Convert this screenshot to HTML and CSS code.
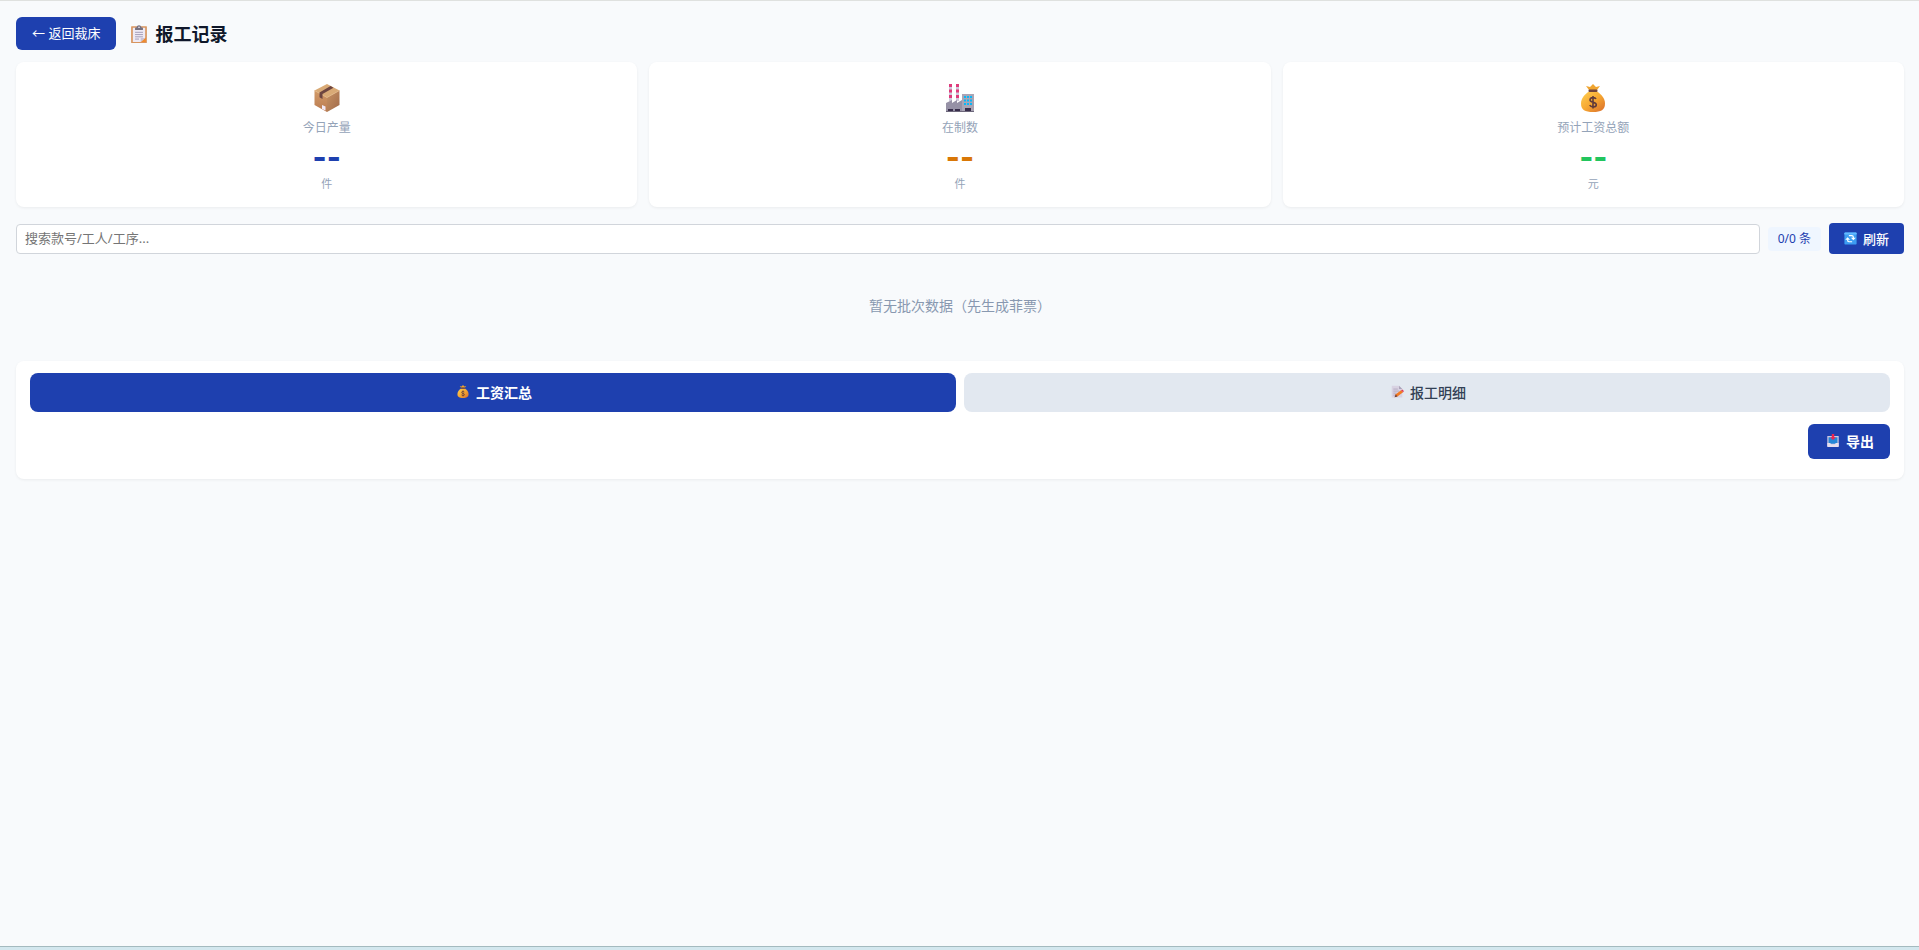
FILE: index.html
```html
<!DOCTYPE html>
<html lang="zh-CN">
  <head>
    <meta charset="UTF-8" />
    <meta name="viewport" content="width=device-width, initial-scale=1.0" />
    <title>报工记录</title>
    <link rel="stylesheet" href="styles.css">
  </head>
  <body>
    <svg class="sprite" aria-hidden="true">
      <defs>
        <linearGradient id="gold" x1="0" y1="0" x2="1" y2="1">
          <stop offset="0" stop-color="#ffd052" />
          <stop offset="0.5" stop-color="#f6a832" />
          <stop offset="1" stop-color="#d96c2c" />
        </linearGradient>
        <linearGradient id="box-left" x1="0" y1="0" x2="0" y2="1">
          <stop offset="0" stop-color="#d29b68" />
          <stop offset="1" stop-color="#b97a51" />
        </linearGradient>
        <linearGradient id="box-right" x1="0" y1="0" x2="1" y2="1">
          <stop offset="0" stop-color="#c79263" />
          <stop offset="1" stop-color="#a06a4a" />
        </linearGradient>
      </defs>

      <symbol id="icon-clipboard" viewBox="0 0 32 32">
        <rect x="2" y="2" width="28" height="30" rx="1" fill="#d8955f" />
        <path d="M5 5h22v18l-7 7H5z" fill="#eeeaf4" />
        <path d="M28 22v8h-9z" fill="#f08b2e" />
        <path d="M19 30v-7h8z" fill="#c9c2d6" />
        <path d="M9 13h14M9 17h14M9 21h14M9 25h7" stroke="#9d96b3" stroke-width="1.6" />
        <path d="M9 9V5l3-1c0-5 8-5 8 0l3 1v4z" fill="#77717f" />
        <circle cx="16" cy="4" r="1.5" fill="#e9e4ee" />
      </symbol>

      <symbol id="icon-box" viewBox="0 0 28 28">
        <path d="M14 0l12.500 6.500L14 13.500 1.500 6.500z" fill="#d9aa76" />
        <path d="M1.500 6.500L14 13.500V28L1.500 21z" fill="url(#box-left)" />
        <path d="M26.500 6.500L14 13.500V28l12.500-7z" fill="url(#box-right)" />
        <path d="M1.500 6.500l12.500 7 12.500-7" fill="none" stroke="#e5b987" stroke-width="0.7" />
        <path d="M17.500 2l3 1.700L9.500 10v5l-3-1.700V8.500z" fill="#6d4540" />
        <path d="M9 21l3.500 1.500v4L9 25z" fill="#f1e8f5" />
      </symbol>

      <symbol id="icon-factory" viewBox="0 0 28 28">
        <path d="M3 0h3v17H3zM10 0h3v17h-3z" fill="#cfc9dc" />
        <path d="M3 0h3v3H3zM3 5.500h3v3H3zM3 11h3v3H3zM10 0h3v3h-3zM10 5.500h3v3h-3zM10 11h3v3h-3z" fill="#df3b7b" />
        <path d="M0 19l6-3v3l5-3v3l5-3v12H0z" fill="#9691a6" />
        <path d="M16 10h12v18H16z" fill="#aaa5b5" />
        <path d="M18 12h2v2h-2zM21 12h2v2h-2zM24 12h2v2h-2zM18 15.500h2v2h-2zM21 15.500h2v2h-2zM24 15.500h2v2h-2zM18 19h2v2h-2zM21 19h2v2h-2zM24 19h2v2h-2z" fill="#08b8f8" />
        <path d="M2 25h5v3H2zM9 25h5v3H9zM19 24h6v4h-6z" fill="#382e4b" />
        <path d="M0 27.500h28" stroke="#6d677b" />
      </symbol>

      <symbol id="icon-money" viewBox="0 0 28 28">
        <path d="M10 6L7 2l4 1 3-3 3 3 4-1-3 4z" fill="#f0a52f" />
        <path d="M10 7.500C6 10 2 14 2 19.500 2 26 6 28 14 28s12-2 12-8.500c0-5.500-4-9.500-8-12z" fill="url(#gold)" />
        <rect x="9.500" y="5.500" width="9" height="2.500" rx="1" fill="#70433c" />
        <path d="M17 15c-1-2-6-2-6 1 0 3 6.300 1.500 6.300 4.700 0 2.800-5.300 2.800-6.600.5M14 12v12.500" fill="none" stroke="#603a3b" stroke-width="1.600" />
      </symbol>

      <symbol id="icon-refresh" viewBox="0 0 32 32">
        <rect x="1" y="1" width="30" height="30" rx="2" fill="#3d9df2" />
        <path d="M1 3a2 2 0 0 1 2-2h26a2 2 0 0 1 2 2v3H1z" fill="#64baff" />
        <path d="M12 9h7c3 0 4 2 4 4v2M20 24h-7c-3 0-4-2-4-4v-2" fill="none" stroke="#fff" stroke-width="3" />
        <path d="M17 14h12l-6 6zM3 19l6-6 6 6z" fill="#fff" />
      </symbol>

      <symbol id="icon-memo" viewBox="0 0 32 32">
        <path d="M3 2h18l8 8v21H3z" fill="#d8d2e2" />
        <path d="M21 2v8h8z" fill="#aaa1b8" />
        <path d="M7 10h11M7 15h14M7 20h8M7 25h6" stroke="#a59bb5" stroke-width="1.600" />
        <path d="M26 13l5 5-14 10-7 2 3-7z" fill="#f27a23" />
        <path d="M26 13l3-2 4 4-2 3z" fill="#df3454" />
        <path d="M13 23l4 5-7 2z" fill="#6d4240" />
      </symbol>

      <symbol id="icon-export" viewBox="0 0 32 32">
        <path d="M2 5h28v25a2 2 0 0 1-2 2H4a2 2 0 0 1-2-2z" fill="#cfc7df" />
        <path d="M5 8h22v16H5z" fill="#2787d8" />
        <path d="M2 22h7l3 4h8l3-4h7v8a2 2 0 0 1-2 2H4a2 2 0 0 1-2-2z" fill="#e7dfef" />
        <path d="M13 0h6v8h4l-7 7-7-7h4z" fill="#ed254f" />
      </symbol>
    </svg>

    <main class="page">
      <header class="header">
        <button class="btn btn-back" type="button">← 返回裁床</button>
        <h1 class="title">
          <svg class="icon icon-title" aria-hidden="true"><use href="#icon-clipboard" /></svg>
          报工记录
        </h1>
      </header>

      <section class="stats">
        <div class="stat">
          <svg class="stat-icon" aria-hidden="true"><use href="#icon-box" /></svg>
          <div class="stat-label">今日产量</div>
          <div class="stat-value blue">--</div>
          <div class="stat-unit">件</div>
        </div>
        <div class="stat">
          <svg class="stat-icon" aria-hidden="true"><use href="#icon-factory" /></svg>
          <div class="stat-label">在制数</div>
          <div class="stat-value orange">--</div>
          <div class="stat-unit">件</div>
        </div>
        <div class="stat">
          <svg class="stat-icon" aria-hidden="true"><use href="#icon-money" /></svg>
          <div class="stat-label">预计工资总额</div>
          <div class="stat-value green">--</div>
          <div class="stat-unit">元</div>
        </div>
      </section>

      <div class="toolbar">
        <input class="search" type="text" placeholder="搜索款号/工人/工序..." aria-label="搜索款号/工人/工序">
        <span class="count">0/0 条</span>
        <button class="btn btn-refresh" type="button">
          <svg class="icon" aria-hidden="true"><use href="#icon-refresh" /></svg>
          刷新
        </button>
      </div>

      <div class="empty">暂无批次数据（先生成菲票）</div>

      <section class="panel">
        <div class="tabs">
          <button class="tab active" type="button">
            <svg class="icon icon-wide" aria-hidden="true"><use href="#icon-money" /></svg>
            工资汇总
          </button>
          <button class="tab" type="button">
            <svg class="icon icon-wide" aria-hidden="true"><use href="#icon-memo" /></svg>
            报工明细
          </button>
        </div>
        <div class="actions">
          <button class="btn btn-export" type="button">
            <svg class="icon icon-wide" aria-hidden="true"><use href="#icon-export" /></svg>
            导出
          </button>
        </div>
      </section>
    </main>
    <footer class="bottom-bar"></footer>
  </body>
</html>
```

FILE: styles.css
```css
* {
  box-sizing: border-box;
}

body {
  display: flex;
  flex-direction: column;
  min-height: 100vh;
  margin: 0;
  border-top: 1px solid #dfe1df;
  background: #f8fafc;
  color: #0f172a;
  font-family: "Noto Sans", "Noto Sans CJK SC", sans-serif;
  font-size: 14px;
}

button,
input {
  font-family: inherit;
}

.sprite {
  position: absolute;
  width: 0;
  height: 0;
}

.page {
  flex: 1;
  padding: 16px 15px 16px 16px;
}

.header {
  display: flex;
  align-items: center;
  gap: 14px;
  margin-bottom: 12px;
}

.btn {
  display: flex;
  align-items: center;
  justify-content: center;
  gap: 6px;
  padding: 0 16px 2px;
  border: none;
  border-radius: 6px;
  background: #1e40af;
  color: #fff;
  font-size: 13px;
  cursor: pointer;
}

.btn-back {
  height: 33px;
}

.title {
  display: flex;
  align-items: center;
  gap: 7px;
  margin: 0;
  font-size: 18px;
  line-height: 24px;
}

.icon {
  flex: none;
  width: 13px;
  height: 13px;
}

.icon-title {
  width: 18px;
  height: 18px;
}

.icon-wide {
  width: 18px;
}

.stats {
  display: grid;
  grid-template-columns: repeat(3, 1fr);
  gap: 12px;
  margin-bottom: 16px;
}

.stat {
  display: flex;
  flex-direction: column;
  align-items: center;
  padding: 22px 16px 15px;
  border-radius: 8px;
  background: #fff;
  box-shadow: 0 1px 3px rgba(0, 0, 0, 0.06);
}

.stat-icon {
  width: 28px;
  height: 28px;
}

.stat-label {
  margin-top: 7px;
  color: #94a3b8;
  font-size: 12px;
  line-height: 18px;
}

.stat-value {
  margin: 3px 0 2px;
  font-family: Inter, sans-serif;
  font-size: 30px;
  font-weight: 800;
  line-height: 34px;
}

.blue {
  color: #1e40af;
}

.orange {
  color: #d97706;
}

.green {
  color: #22c55e;
}

.stat-unit {
  color: #94a3b8;
  font-size: 11px;
  line-height: 16px;
}

.toolbar {
  display: flex;
  align-items: center;
  gap: 8px;
  margin-bottom: 12px;
}

.search {
  flex: 1;
  min-width: 0;
  height: 30px;
  padding: 0 8px 2px;
  border: 1px solid #d1d5db;
  border-radius: 4px;
  background: #fff;
  font-size: 13px;
}

.search::placeholder {
  color: #757575;
}

.count {
  padding: 3px 10px;
  border-radius: 4px;
  background: #eff6ff;
  color: #1e40af;
  font-size: 12px;
  line-height: 18px;
}

.btn-refresh {
  height: 31px;
  padding: 0 15px;
  border-radius: 4px;
  font-weight: 500;
}

.empty {
  margin-bottom: 16px;
  padding: 30px;
  color: #8898b0;
  line-height: 19px;
  text-align: center;
}

.panel {
  padding: 12px 14px 20px;
  border-radius: 8px;
  background: #fff;
  box-shadow: 0 1px 3px rgba(0, 0, 0, 0.06);
}

.tabs {
  display: flex;
  gap: 8px;
  margin-bottom: 12px;
}

.tab {
  display: flex;
  flex: 1;
  align-items: center;
  justify-content: center;
  gap: 4px;
  height: 39px;
  padding: 0 16px 2px;
  border: none;
  border-radius: 8px;
  background: #e2e8f0;
  color: #334155;
  font-size: 14px;
  font-weight: 500;
  cursor: pointer;
}

.tab.active {
  background: #1e40af;
  color: #fff;
  font-weight: 700;
}

.actions {
  display: flex;
  justify-content: flex-end;
}

.btn-export {
  gap: 4px;
  height: 35px;
  font-size: 14px;
  font-weight: 700;
}

.bottom-bar {
  height: 4px;
  border-top: 1px solid #a4babf;
  background: #d3e7ee;
}
```
